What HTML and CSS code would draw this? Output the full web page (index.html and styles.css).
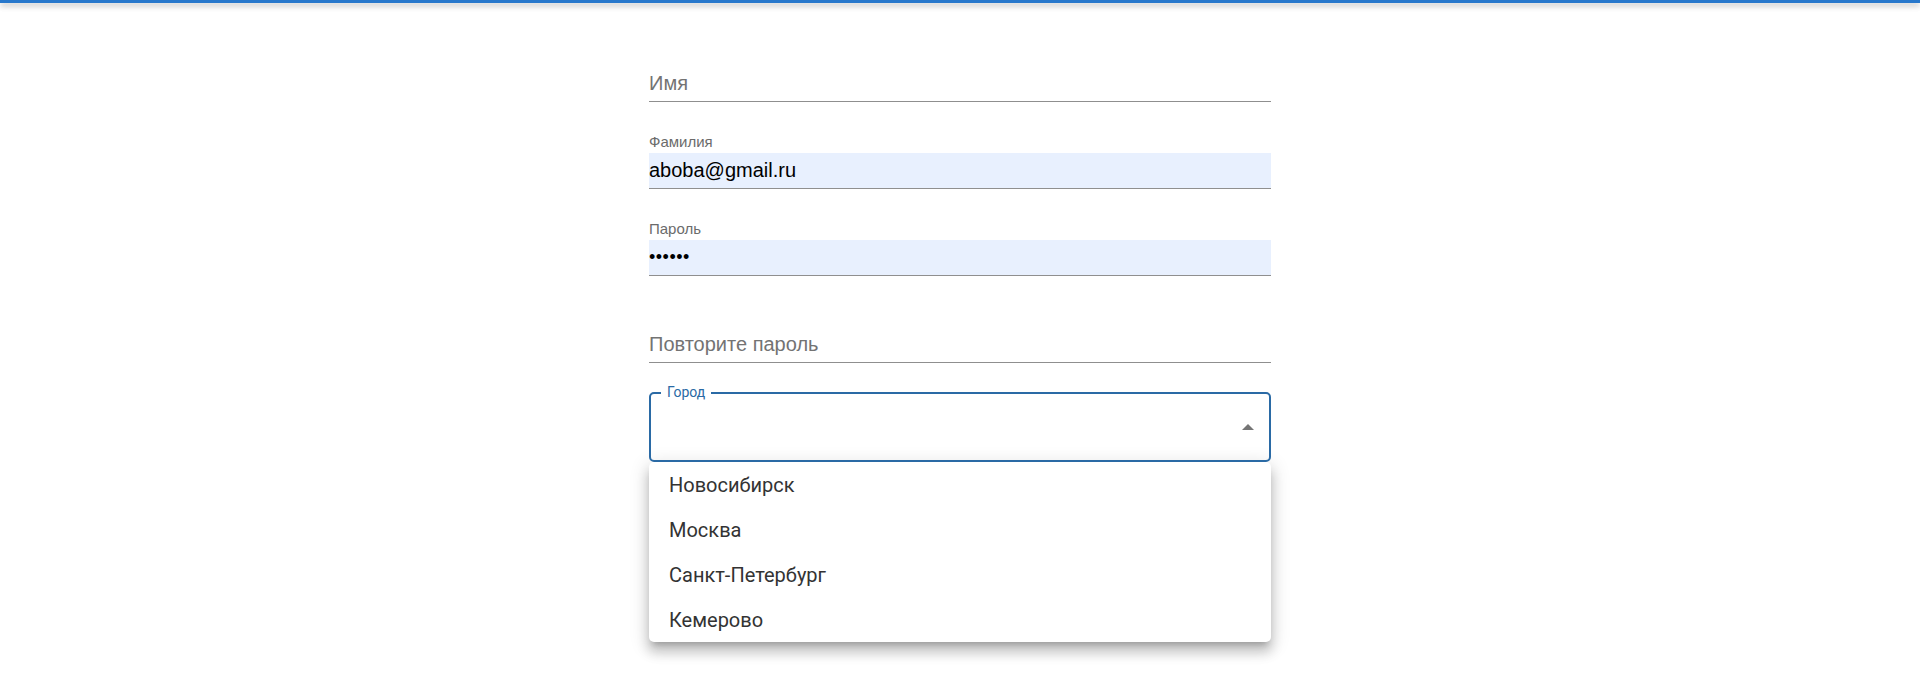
FILE: index.html
```html
<!DOCTYPE html>
<html lang="ru">
<head>
<meta charset="utf-8">
<title>Регистрация</title>
<link rel="stylesheet" href="styles.css">
</head>
<body>
<div class="topbar"></div>
<main class="form">
  <div class="field">
    <div class="field-label"></div>
    <div class="field-input placeholder">Имя</div>
  </div>
  <div class="field">
    <div class="field-label">Фамилия</div>
    <div class="field-input autofill">aboba@gmail.ru</div>
  </div>
  <div class="field">
    <div class="field-label">Пароль</div>
    <div class="field-input autofill dots">••••••</div>
  </div>
  <div class="field">
    <div class="field-label"></div>
    <div class="field-input placeholder">Повторите пароль</div>
  </div>
  <div class="select">
    <span class="select-label">Город</span>
    <span class="select-arrow"></span>
  </div>
  <div class="menu">
    <div class="menu-item">Новосибирск</div>
    <div class="menu-item">Москва</div>
    <div class="menu-item">Санкт-Петербург</div>
    <div class="menu-item">Кемерово</div>
  </div>
</main>
</body>
</html>
```
FILE: styles.css
```css
html, body {
  margin: 0;
  padding: 0;
  background: #fff;
}
body {
  font-family: "Liberation Sans", Arial, sans-serif;
  min-height: 690px;
}
.topbar {
  height: 3px;
  background: #2878cc;
  box-shadow: 0 2px 4px -1px rgba(0,0,0,0.2), 0 4px 5px 0 rgba(0,0,0,0.14), 0 1px 10px 0 rgba(0,0,0,0.12);
}
.form {
  width: 622px;
  margin: 0 auto;
  padding-top: 12px;
  padding-bottom: 40px;
  display: flex;
  flex-direction: column;
}
.field {
  padding-top: 31px;
  display: flex;
  flex-direction: column;
}
.field-label {
  height: 18px;
  font-size: 15px;
  line-height: 18px;
  color: #6b6b6b;
}
.field-input {
  margin-top: 2px;
  height: 35px;
  border-bottom: 1px solid #8f8f8f;
  display: flex;
  align-items: center;
  font-size: 20px;
  color: #000;
}
.placeholder {
  color: #737373;
}
.autofill {
  background: #e8f0fe;
}
.dots {
  font-size: 18px;
  letter-spacing: 0.5px;
}
.select {
  position: relative;
  margin-top: 29px;
  height: 70px;
  box-sizing: border-box;
  border: 2px solid #2a6aa5;
  border-radius: 5px;
  display: flex;
  align-items: center;
  justify-content: flex-end;
  padding-right: 15px;
}
.select-label {
  position: absolute;
  left: 10px;
  top: -2px;
  transform: translateY(-50%);
  padding: 0 6px;
  background: #fff;
  font-family: Roboto, "Liberation Sans", sans-serif;
  font-size: 14px;
  line-height: 1;
  color: #2a6aa5;
}
.select-arrow {
  width: 0;
  height: 0;
  border-left: 6px solid transparent;
  border-right: 6px solid transparent;
  border-bottom: 6px solid #757575;
}
.menu {
  background: #fff;
  border-radius: 5px;
  box-shadow: 0 6px 6px -4px rgba(0,0,0,0.22), 0 10px 12px 1px rgba(0,0,0,0.16), 0 4px 18px 3px rgba(0,0,0,0.12);
  display: flex;
  flex-direction: column;
}
.menu-item {
  height: 45px;
  display: flex;
  align-items: center;
  padding-left: 20px;
  font-family: Roboto, "Liberation Sans", sans-serif;
  font-size: 20px;
  color: #333;
}
```
